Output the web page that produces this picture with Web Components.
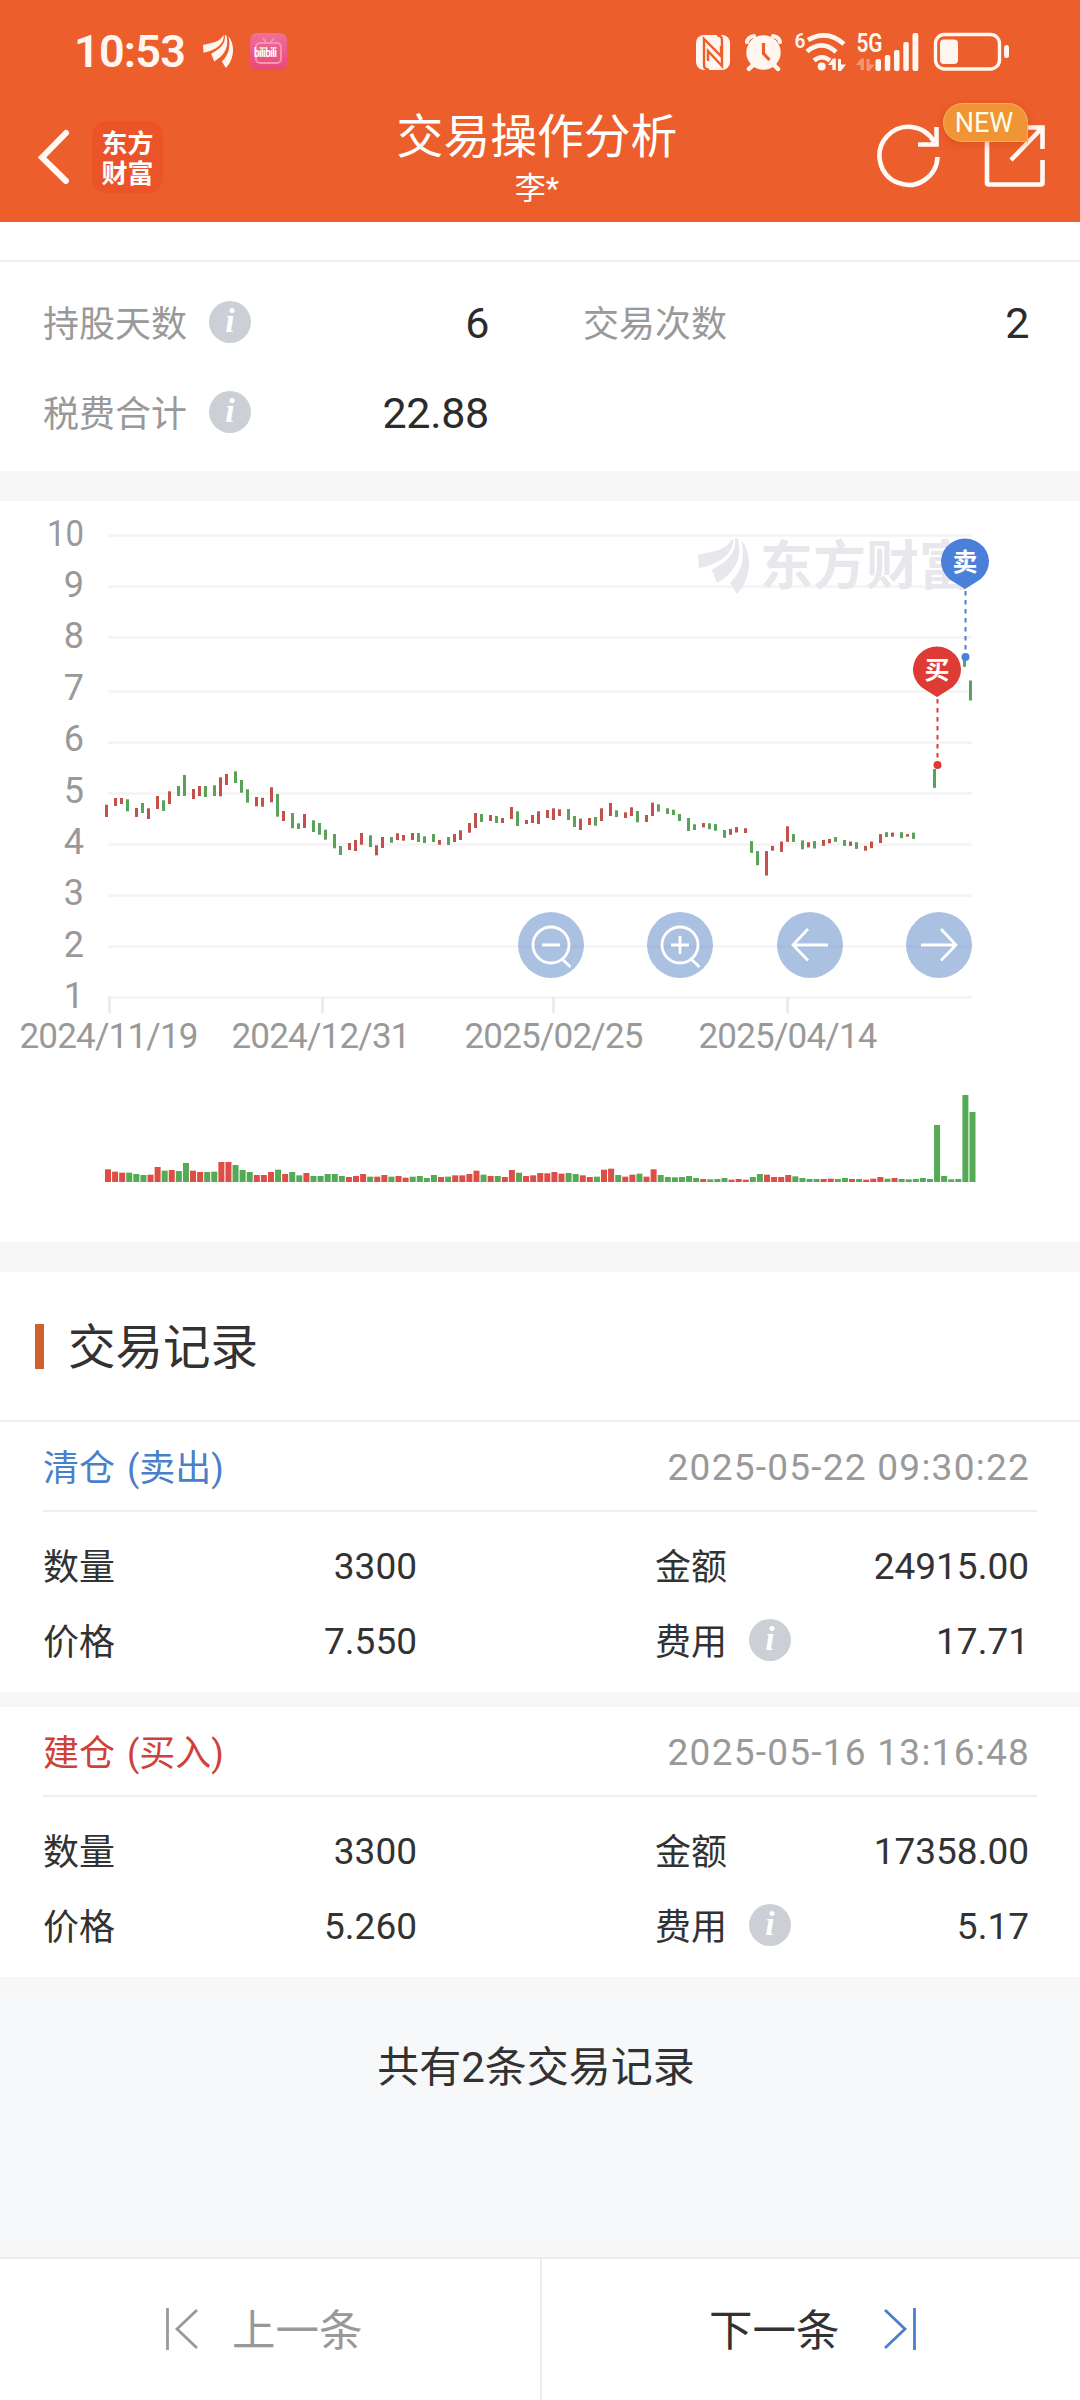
<!DOCTYPE html>
<html lang="zh-CN">
<head>
<meta charset="utf-8">
<meta name="viewport" content="width=device-width">
<title>交易操作分析</title>
<style>
  body {
    margin: 0;
    width: 1080px;
    height: 2400px;
    overflow: hidden;
    background: #f7f7f7;
    font-family: Roboto, "Noto Sans CJK SC", sans-serif;
    color: #323232;
  }
</style>
</head>
<body>
<trade-app></trade-app>

<script>
const define = (name, html, setup) => {
  const template = document.createElement('template');
  template.innerHTML = html;
  customElements.define(name, class extends HTMLElement {
    constructor() {
      super();
      this.attachShadow({mode: 'open'});
      this.shadowRoot.appendChild(template.content.cloneNode(true));
    }
    connectedCallback() {
      if (setup) setup(this, this.shadowRoot);
    }
  });
};

// three feather logo, shared by the status bar and the chart watermark
const FEATHER = `
  <path d="M0 17C15 13 28 13 35 0C37 14 23 26 1 30Z"/>
  <path d="M37 0C39 14 30 23 14 32L19 45C34 36 45 24 40 1Z"/>
  <path d="M43 2C48 20 43 35 32 45L39 56C51 44 57 19 43 2Z"/>`;

define('status-bar', `
  <style>
    :host { display: flex; height: 103px; align-items: center; padding: 0 71px 0 74px; box-sizing: border-box; color: #fff6f0; }
    .time { font-size: 45px; font-weight: 600; line-height: 50px; width: 129px; letter-spacing: -0.8px; }
    .apps { display: flex; gap: 17px; align-items: center; flex: 1; }
    svg { display: block; overflow: visible; }
    .icons { display: flex; align-items: center; }
  </style>
  <span class="time">10:53</span>
  <div class="apps">
    <svg width="30" height="33" viewBox="0 0 51 56" fill="#fff6f0">${FEATHER}</svg>
    <svg width="37" height="37" viewBox="0 0 37 37">
      <defs><linearGradient id="pk" x1="0" y1="0" x2="0" y2="1"><stop offset="0" stop-color="#f0709a"/><stop offset="1" stop-color="#ea4679"/></linearGradient></defs>
      <rect width="37" height="37" rx="7" fill="url(#pk)"/>
      <g fill="none" stroke="#f593b3" stroke-width="2"><rect x="6" y="10" width="25" height="20" rx="4"/><path d="M13 5l3 4M24 5l-3 4"/></g>
      <text x="4" y="24" font-size="10" font-weight="700" fill="#fff" transform="translate(0 -8) scale(1 1.330)" letter-spacing="-0.600">bilibili</text>
    </svg>
  </div>
  <div class="icons">
    <svg width="313" height="60" viewBox="696 21 313 60" fill="#fff6f0">
      <rect x="696" y="34" width="34" height="35" rx="8"/>
      <g fill="none" stroke="#ec5f2d" stroke-width="2.4">
        <path d="M709 69C704 68 704 66 704 63V38L721 55V45"/>
        <path d="M717 34C722 35 722 37 722 40V65L708 50V60"/>
      </g>
      <circle cx="763.500" cy="51.500" r="17.200"/>
      <g fill="none" stroke="#fff6f0" stroke-linecap="round">
        <path stroke-width="4" d="M747 41Q748 36 754 35M773 35Q779 36 780 41"/>
        <path stroke-width="4.500" d="M754 63l-5 5M773 63l5 5"/>
        <path stroke="#ec5f2d" stroke-width="3.200" stroke-linecap="butt" d="M763.500 42V52.500L769.500 59"/>
        <g stroke-width="4.600" stroke-linecap="butt">
          <path d="M808 39Q827 28 844 43"/>
          <path d="M807 50.500Q822 38 836 51"/>
          <path d="M814 59.500Q822 53 830 59.500"/>
        </g>
      </g>
      <circle cx="821.700" cy="65.500" r="4"/>
      <text x="794.500" y="46.500" font-size="21" font-weight="600" textLength="11" lengthAdjust="spacingAndGlyphs">6</text>
      <path d="M828 64l5-6.500h2.800V69h-3.500v-5zM838 58h3v5.500h5L841 70h-3z"/>
      <text x="856.500" y="50.500" font-size="26" font-weight="600" textLength="26" lengthAdjust="spacingAndGlyphs">5G</text>
      <path opacity=".35" d="M856 64l5-6.500h3V69h-3.500v-5zM866.500 58h3v5.500h5l-5 6.500h-3z"/>
      <rect x="875.500" y="58" width="5.500" height="12" rx="2"/>
      <rect x="884.800" y="54" width="5.500" height="16" rx="2"/>
      <rect x="894" y="49" width="5.500" height="21" rx="2"/>
      <rect x="903.300" y="41" width="5.500" height="29" rx="2"/>
      <rect x="912.500" y="32" width="5.800" height="38" rx="2"/>
      <rect x="935.500" y="33.500" width="64" height="34.500" rx="9" fill="none" stroke="#fff6f0" stroke-width="3.400"/>
      <rect x="940" y="38.500" width="18" height="24.500" rx="4"/>
      <rect x="1004" y="44" width="5" height="13" rx="2.500"/>
    </svg>
  </div>
`);

define('nav-header', `
  <style>
    :host { display: grid; grid-template-columns: 1fr auto 1fr; height: 119px; padding: 0 34px 0 28px; box-sizing: border-box; color: #fff; }
    .left { display: flex; align-items: center; height: 107px; gap: 22px; padding-left: 10px; }
    .logo { width: 71px; height: 72px; border-radius: 15px; background: #eb5328; display: grid; align-content: center; justify-content: center;
      font: 700 26px/29.500px "Noto Sans CJK SC", sans-serif; }
    .logo span { width: 52px; word-break: break-all; }
    .title { text-align: center; padding-top: 9px; }
    h1 { margin: 0; font-size: 46.800px; line-height: 50px; font-weight: 400; }
    p { margin: 6px 0 0; font-size: 31px; line-height: 42px; }
    .right { display: flex; justify-content: flex-end; align-items: center; height: 106px; position: relative; gap: 43px; }
    .badge { position: absolute; right: 18px; top: 0; width: 85px; height: 39px; box-sizing: border-box; border: 1px solid #f4b066;
      border-radius: 20px 20px 0 20px; background: #ef9535; font-size: 27px; line-height: 38px; text-align: center; text-indent: -3px; color: #fffbe8;
      box-shadow: 0 2px 8px rgba(200, 60, 10, .45); }
    svg { display: block; fill: none; stroke: #fffaf5; }
  </style>
  <div class="left">
    <svg width="32" height="56" viewBox="0 0 32 56" stroke-width="6" stroke-linecap="round" stroke-linejoin="miter"><path d="M28 4L4 28.500L28 52"/></svg>
    <div class="logo"><span>东方财富</span></div>
  </div>
  <div class="title"><h1><slot></slot></h1><p><slot name="user"></slot></p></div>
  <div class="right">
    <svg width="64" height="66" viewBox="877 123 64 66" stroke-width="4.600"><path d="M934 142A29 29 0 1 0 937.500 157"/><path d="M936.500 127V144.500H918"/></svg>
    <svg width="62" height="64" viewBox="984 124 62 64" stroke-width="4.600"><path d="M987 138V183Q987 184.500 988.500 184.500H1041Q1042.500 184.500 1042.500 183V160"/><path d="M1020 127.500H1042.500V149M1042 128L1011 160"/></svg>
    <div class="badge">NEW</div>
  </div>
`);

define('info-icon', `
  <style>
    :host { display: block; width: 42px; height: 42px; border-radius: 50%; background: #cccfd5; color: #fff;
      font: italic 700 34px/40px "Liberation Serif", serif; text-align: center; }
  </style>i
`);

define('stat-item', `
  <style>
    :host { display: flex; align-items: center; height: 90px; }
    .label { font-size: 36px; color: #999; margin-right: 22px; padding-bottom: 4px; }
    .value { margin-left: auto; font-size: 43px; letter-spacing: -0.3px; color: #2b2b2b; padding-bottom: 1px; }
    info-icon { margin-top: -2px; }
    info-icon[hidden] { display: none; }
  </style>
  <span class="label"><slot></slot></span><info-icon></info-icon><span class="value"></span>
`, (el, root) => {
  root.querySelector('.value').textContent = el.getAttribute('value');
  root.querySelector('info-icon').hidden = !el.hasAttribute('info');
});

define('stat-panel', `
  <style>
    :host { display: block; background: #fff; height: 249px; box-sizing: border-box; padding-top: 38px; }
    .grid { border-top: 2px solid #eee; padding: 16px 51px 0 43px; display: grid; grid-template-columns: 446px 446px; column-gap: 94px; }
  </style>
  <div class="grid"><slot></slot></div>
`);

// x, top, bottom, colour of every candle
const CANDLES = [];
const addCandles = (ox, oy, sy, rows) => rows.trim().split(/\s*,\s*/).forEach(row => {
  const [x, a, b, c] = row.split(' ');
  CANDLES.push([ox + x / 3, oy + a / sy, oy + b / sy, c]);
});
addCandles(80, 740, 3, `79 194 231 r,106 174 198 r,124 174 192 r,142 178 214 g,169 204 231 r,187 189 219 g,205 205 237 r,
232 168 207 r,250 181 213 g,268 154 192 r,295 138 168 g,313 105 168 g,340 147 177 r,358 138 168 r,376 138 171 g,
403 136 168 g,421 112 169 r,439 102 135 r,466 94 129 g,484 120 158 g,502 148 188 g,529 171 199 r,547 173 200 r,
574 142 187 r,592 162 230 g,610 213 243 r,637 219 265 g,655 250 267 g,673 222 264 r,700 241 276 g,718 249 284 g,
736 269 299 g,763 282 325 g,781 318 345 g,808 309 330 r,826 300 333 r,844 279 314 r,871 286 321 g,889 316 346 r,
907 291 324 r,934 291 308 g,952 280 300 r`);
addCandles(380, 740, 3, `70 285 302 r,97 279 300 r,115 279 306 g,133 289 309 g,160 282 306 g,178 300 314 r,205 291 315 g,
223 282 306 r,241 271 300 r,268 249 278 r,286 219 264 r,304 222 246 g,331 225 243 r,349 228 249 g,367 234 249 r,
394 201 237 r,412 214 258 g,439 240 252 r,457 225 249 r,475 214 252 r,502 210 234 r,520 205 240 r,538 208 228 r,
565 207 240 g,583 228 261 g,601 236 270 r,628 234 255 r,646 231 257 g,664 205 243 r,691 189 228 r,709 211 231 g,
736 217 234 r,754 202 228 r,772 213 247 g,799 225 246 r,817 188 228 r,835 193 215 g,862 205 222 g,880 209 225 g,
898 222 243 g,925 234 273 g,943 253 270 g`);
addCandles(640, 500, 2.703, `190 873 885 r,208 874 890 g,226 876 894 g,253 892 913 g,271 889 905 r,289 884 899 r,
316 887 900 r,334 922 954 g,352 949 987 g,379 949 1015 r,397 935 948 r,424 923 951 r,442 882 924 r,460 903 924 g,
487 920 944 g,505 925 939 r,523 922 942 g,550 919 935 r,568 916 928 r,586 911 924 g,613 919 935 g,631 923 935 r,
649 925 943 g,676 935 948 r,694 923 941 r,721 903 927 r,739 898 911 g,757 899 910 r,784 898 914 g,802 903 910 r,
820 899 916 g,883 727 778 g,973 432 451 g,991 488 542 g`);

// volume bar height in thirds of a pixel, plus colour
const VOLUMES = `38r 31r 28r 28g 24g 21g 22r 45r 34g 36r 33g 57g 34r 30r 30g 31g 60r 60r 51g 36g 30g 21r 21r 30r 37g 24r 30g 20g
27r 18g 18g 24g 24g 18g 15r 18r 24r 16g 16r 21r 16g 18r 13r 16g 18g 12g 21g 15r 16g 20r 20r 24r 34r 22g 18r 18g 15r 36r 28g 18r
20r 27r 26r 30r 25r 27g 24g 20r 15r 16g 37r 40r 21g 16r 22r 25g 16r 38r 21g 15g 14g 15g 18g 12g 9r 8g 9g 12g 7r 9r 7r 15g 24g 22r
15r 15r 21r 17g 12g 9g 9g 9r 10r 9g 12g 9r 9g 7r 10r 15r 10g 12r 9g 8g 9g 12g 9g 171g 18g 8g 9g 261g 210g`.split(/\s+/);

define('chart-tool', `
  <style>
    :host { display: block; width: 66px; height: 66px; border-radius: 50%; background: rgba(71, 120, 190, .46); }
    svg { display: block; fill: none; stroke: #fff; stroke-width: 2.800; }
  </style>
  <svg width="66" height="66" viewBox="0 0 66 66"><path/></svg>
`, (el, root) => {
  const lens = 'M51 33A18 18 0 1 1 15 33A18 18 0 1 1 51 33M43 46L52.500 55M24 33H42';
  root.querySelector('path').setAttribute('d', {
    out: lens,
    in: lens + 'M33 24V42',
    prev: 'M51 33H16M31 17L16 33L31 48.500',
    next: 'M15 33H50M35 17L50 33L35 48.500'
  }[el.getAttribute('kind')]);
});

define('kline-chart', `
  <style>
    :host { display: block; position: relative; height: 741px; background: #fff; }
    svg { display: block; }
    text { font-family: Roboto, "Noto Sans CJK SC", sans-serif; }
    .tools { position: absolute; left: 518px; top: 411px; display: grid; grid-template-columns: 129px 130px 129px 66px; }
  </style>
  <svg width="1080" height="741" viewBox="0 501 1080 741"></svg>
  <div class="tools">
    <chart-tool kind="out"></chart-tool>
    <chart-tool kind="in"></chart-tool>
    <chart-tool kind="prev"></chart-tool>
    <chart-tool kind="next"></chart-tool>
  </div>
`, (el, root) => {
  const grid = [534, 585, 636, 690, 741, 792, 843, 894, 945, 996];
  let out = `<g transform="translate(698 538)" fill="#e7e7ec">${FEATHER}</g>
    <text x="760" y="585" font-size="53" font-weight="700" fill="#e7e7ec" textLength="212">东方财富</text>`;
  grid.forEach((y, i) => {
    const fit = i ? '' : ' textLength="37" lengthAdjust="spacingAndGlyphs"';
    out += `<rect x="108" y="${y}" width="864" height="3" fill="#e9e9ec" fill-opacity=".45"/>
      <text x="84" y="${545.5 + i * 51.4}" text-anchor="end" font-size="36" fill="#999"${fit}>${10 - i}</text>`;
  });
  [[109.5, 109.5, '2024/11/19'], [322.5, 321.5, '2024/12/31'], [553.5, 554.5, '2025/02/25'], [787.5, 788.5, '2025/04/14']].forEach(([x, mid, label]) => {
    out += `<rect x="${x - 1.5}" y="997" width="3" height="16" fill="#ececec"/>
      <text x="${mid - 90}" y="1048" font-size="35" fill="#999" textLength="179">${label}</text>`;
  });
  CANDLES.forEach(([x, a, b, c]) => {
    out += `<rect x="${Math.round(x - 1.5)}" y="${a.toFixed(1)}" width="3" height="${(b - a).toFixed(1)}" fill="${c === 'r' ? '#c2504b' : '#5aa259'}"/>`;
  });
  VOLUMES.forEach((v, i) => {
    const h = parseInt(v, 10) / 3;
    out += `<rect x="${(105 + i * 7.086).toFixed(2)}" y="${(1182 - h).toFixed(2)}" width="6" height="${h.toFixed(2)}" fill="${v.endsWith('r') ? '#dd4e47' : '#55aa56'}"/>`;
  });
  const pin = (x, y, end, color, word) => `
    <path d="M${x} ${y + 51}L${x - 12} ${y + 43.5}A24 23 0 1 1 ${x + 12} ${y + 43.5}Z" fill="${color}"/>
    <text x="${x}" y="${y + 33}" text-anchor="middle" font-size="25" font-weight="700" fill="#fff">${word}</text>
    <path d="M${x + 0.5} ${y + 53}V${end}" stroke="${color}" stroke-width="2" stroke-dasharray="4.500 4.500"/>
    <circle cx="${x + 0.5}" cy="${end}" r="4" fill="${color}"/>`;
  out += pin(965, 538, 657, '#4a80da', '卖') + pin(937, 646, 765, '#dd3b34', '买');
  root.querySelector('svg').innerHTML = out;
});

define('section-title', `
  <style>
    :host { display: flex; align-items: center; height: 148px; padding-left: 35px; gap: 24px; background: #fff; font-size: 47.500px; border-bottom: 2px solid #eee; }
    i { width: 9px; height: 45px; background: #d0612d; }
    span { padding-bottom: 5px; }
  </style>
  <i></i><span><slot></slot></span>
`);

define('trade-record', `
  <style>
    :host { display: block; height: 270px; background: #fff; font-size: 36px; }
    header { display: flex; align-items: center; justify-content: space-between; height: 88px; margin: 0 43px; padding-right: 8px; border-bottom: 2px solid #eee; }
    .kind { color: var(--kind, #4a7fcb); word-spacing: 3px; padding-bottom: 2px; }
    time { color: #999; font-size: 37px; letter-spacing: 1.250px; margin-right: -1px; padding-top: 2px; }
    dl { margin: 0; padding: 17px 51px 0 43px; display: grid; grid-template: 75px 75px / 374px 374px; column-gap: 238px; }
    div { display: flex; align-items: center; }
    dt { margin-right: 22px; padding-bottom: 5px; }
    dd { margin: 0 0 0 auto; font-size: 37px; }
    info-icon { margin-top: -3px; }
  </style>
  <header><span class="kind"><slot></slot></span><time></time></header>
  <dl>
    <div><dt>数量</dt><dd id="count"></dd></div>
    <div><dt>金额</dt><dd id="amount"></dd></div>
    <div><dt>价格</dt><dd id="price"></dd></div>
    <div><dt>费用</dt><info-icon></info-icon><dd id="fee"></dd></div>
  </dl>
`, (el, root) => {
  root.querySelector('time').textContent = el.getAttribute('time');
  ['count', 'amount', 'price', 'fee'].forEach(k => {
    root.getElementById(k).textContent = el.getAttribute(k);
  });
});

define('pager-bar', `
  <style>
    :host { display: grid; grid-template-columns: 542px 1fr; height: 141px; border-top: 2px solid #ececec; background: #fff; font-size: 43.500px; }
    div { display: flex; align-items: center; }
    .prev { color: #999; border-right: 2px solid #ececec; padding-left: 165px; gap: 33px; }
    .next { padding-left: 167px; gap: 43px; }
    span { padding-bottom: 5px; }
    svg { display: block; fill: none; stroke: currentColor; stroke-width: 2.800; margin-top: -2px; }
    .next svg { color: #4a7fcb; }
  </style>
  <div class="prev"><svg width="34" height="44" viewBox="0 0 34 44"><path d="M2.500 1V43M32 3L12 22L32 41"/></svg><span>上一条</span></div>
  <div class="next"><span>下一条</span><svg width="34" height="44" viewBox="0 0 34 44"><path d="M31.500 1V43M2 3L22 22L2 41"/></svg></div>
`);

define('trade-app', `
  <style>
    :host { display: flex; flex-direction: column; height: 2400px; }
    .top { background: #ec5f2d; height: 222px; }
    .records { display: flex; flex-direction: column; gap: 15px; }
    kline-chart { margin: 30px 0; }
    .total { margin: 15px 0; flex: 1; background: #f7f8fa; font-size: 42px; line-height: 60px; padding-top: 46px; text-align: center; text-indent: -8px; }
    .buy { --kind: #cf4038; }
  </style>
  <div class="top">
    <status-bar></status-bar>
    <nav-header>交易操作分析<span slot="user">李*</span></nav-header>
  </div>
  <stat-panel>
    <stat-item value="6" info>持股天数</stat-item>
    <stat-item value="2">交易次数</stat-item>
    <stat-item value="22.88" info>税费合计</stat-item>
  </stat-panel>
  <kline-chart></kline-chart>
  <section-title>交易记录</section-title>
  <div class="records">
    <trade-record time="2025-05-22 09:30:22" count="3300" amount="24915.00" price="7.550" fee="17.71">清仓 (卖出)</trade-record>
    <trade-record class="buy" time="2025-05-16 13:16:48" count="3300" amount="17358.00" price="5.260" fee="5.17">建仓 (买入)</trade-record>
  </div>
  <div class="total">共有2条交易记录</div>
  <pager-bar></pager-bar>
`);
</script>
</body>
</html>
